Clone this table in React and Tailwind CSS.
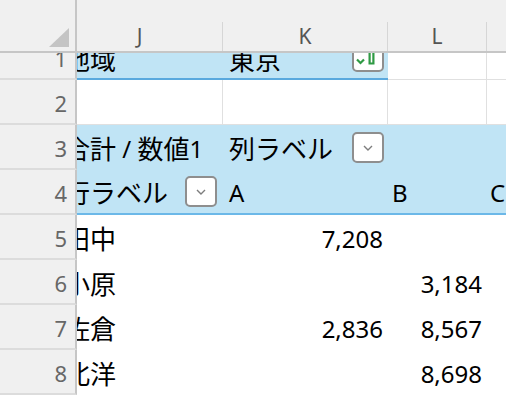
import React from "react";

const BLUE = "bg-[#c0e4f5]";

const DropBtn = ({ filtered }) => (
    <div className="w-[32px] h-[31px] shrink-0 rounded-[5px] border-2 border-[#8e8e8e] bg-white flex items-center justify-center">
        {filtered ? (
            <svg width="24" height="20" viewBox="0 0 24 20" className="-ml-[2px]">
                <path d="M2 12.5l3.5 3.5 3.5-3.5" stroke="#2f9a44" strokeWidth="2.2" fill="none" />
                <path d="M12 0l2.6 5v11.5h3.8V5L21 0" stroke="#2f9a44" strokeWidth="2.2" fill="none" />
            </svg>
        ) : (
            <svg width="10" height="6" viewBox="0 0 10 6">
                <path d="M1 1l4 4 4-4" stroke="#7d7d7d" strokeWidth="1.4" fill="none" />
            </svg>
        )}
    </div>
);

const RowNum = ({ n }) => (
    <div className="w-[77px] shrink-0 h-[45px] bg-[#f0f0f0] border-r-2 border-r-[#c6c6c6] border-b-2 border-b-[#dcdcdc] flex items-center justify-end pr-[8px] pt-[3px] text-[22px] text-[#676767]">
        {n}
    </div>
);

const App = () => {
    return (
        <div className="w-[506px] h-[396px] overflow-hidden bg-white text-black font-['Noto_Sans','Noto_Sans_CJK_JP',sans-serif] leading-none">
            {/* column headers */}
            <div className="flex h-[53px] bg-[#f0f0f0] border-b-2 border-b-[#c6c6c6]">
                <div className="w-[77px] shrink-0 border-r-2 border-r-[#c6c6c6] flex items-end justify-end pr-[6px] pb-[4px]">
                    <svg width="20" height="19" viewBox="0 0 20 19">
                        <path d="M20 0V19H0Z" fill="#c4c4c4" />
                    </svg>
                </div>
                <div className="w-[146px] shrink-0 overflow-hidden flex flex-col">
                    <div className="h-[22px]" />
                    <div className="flex-1 -ml-[20px] w-[166px] border-r border-r-[#d6d6d6] flex items-center justify-center text-[21px] text-[#555]">J</div>
                </div>
                <div className="w-[165px] shrink-0 flex flex-col">
                    <div className="h-[22px]" />
                    <div className="flex-1 border-r border-r-[#d6d6d6] flex items-center justify-center text-[21px] text-[#555]">K</div>
                </div>
                <div className="w-[99px] shrink-0 flex flex-col">
                    <div className="h-[22px]" />
                    <div className="flex-1 border-r border-r-[#d6d6d6] flex items-center justify-center text-[21px] text-[#555]">L</div>
                </div>
                <div className="flex-1" />
            </div>

            {/* row 1, top scrolled under header */}
            <div className="flex items-end h-[27px] overflow-hidden text-[26px]">
                <RowNum n="1" />
                <div className={`w-[146px] shrink-0 h-[45px] overflow-hidden ${BLUE} border-b-2 border-b-[#5aa9de]`}>
                    <div className="-ml-[20px] w-[166px] h-full flex items-center pl-[7px] pt-[7px]">地域</div>
                </div>
                <div className={`w-[165px] shrink-0 h-[45px] ${BLUE} border-b-2 border-b-[#5aa9de] flex items-center justify-between pl-[6px] pr-[4px]`}>
                    <span className="pt-[7px]">東京</span>
                    <DropBtn filtered />
                </div>
                <div className="w-[99px] shrink-0 h-[45px] border-r border-b border-[#e0e0e0]" />
                <div className="flex-1 h-[45px] border-b border-[#e0e0e0]" />
            </div>

            {/* row 2 */}
            <div className="flex h-[45px]">
                <RowNum n="2" />
                <div className="w-[146px] shrink-0 border-r border-b border-[#e0e0e0]" />
                <div className="w-[165px] shrink-0 border-r border-b border-[#e0e0e0]" />
                <div className="w-[99px] shrink-0 border-r border-b border-[#e0e0e0]" />
                <div className="flex-1 border-b border-[#e0e0e0]" />
            </div>

            {/* row 3 */}
            <div className="flex h-[45px] text-[24px]">
                <RowNum n="3" />
                <div className={`flex-1 flex ${BLUE}`}>
                    <div className="w-[146px] shrink-0 overflow-hidden">
                        <div className="-ml-[20px] w-[166px] h-full flex items-center pl-[7px] pt-[3px] whitespace-pre">
                            <span className="text-[26px]">合計</span> / <span className="text-[26px]">数値</span>1
                        </div>
                    </div>
                    <div className="w-[165px] shrink-0 flex items-center justify-between pl-[6px] pr-[4px]">
                        <span className="pt-[3px] text-[26px]">列ラベル</span>
                        <DropBtn />
                    </div>
                </div>
            </div>

            {/* row 4 */}
            <div className="flex h-[45px] text-[24px]">
                <RowNum n="4" />
                <div className={`flex-1 flex ${BLUE} border-b-2 border-b-[#6cb8e8]`}>
                    <div className="w-[146px] shrink-0 overflow-hidden">
                        <div className="-ml-[20px] w-[166px] h-full flex items-center justify-between pl-[7px] pr-[6px]">
                            <span className="pt-[3px] text-[26px]">行ラベル</span>
                            <DropBtn />
                        </div>
                    </div>
                    <div className="w-[165px] shrink-0 flex items-center pl-[6px] pt-[3px]">A</div>
                    <div className="w-[100px] shrink-0 flex items-center pl-[4px] pt-[3px]">B</div>
                    <div className="flex-1 flex items-center pl-[2px] pt-[3px]">C</div>
                </div>
            </div>

            {/* data rows */}
            {[
                { n: "5", name: "田中", a: "7,208", b: "" },
                { n: "6", name: "小原", a: "", b: "3,184" },
                { n: "7", name: "佐倉", a: "2,836", b: "8,567" },
                { n: "8", name: "北洋", a: "", b: "8,698" },
            ].map((r) => (
                <div key={r.n} className="flex h-[45px] text-[24px]">
                    <RowNum n={r.n} />
                    <div className="w-[146px] shrink-0 overflow-hidden">
                        <div className="-ml-[20px] w-[166px] h-full flex items-center pl-[7px] pt-[3px] text-[26px]">{r.name}</div>
                    </div>
                    <div className="w-[165px] shrink-0 flex items-center justify-end pr-[5px] pt-[3px]">{r.a}</div>
                    <div className="w-[100px] shrink-0 flex items-center justify-end pr-[6px] pt-[3px]">{r.b}</div>
                    <div className="flex-1" />
                </div>
            ))}
        </div>
    );
};

export default App;
